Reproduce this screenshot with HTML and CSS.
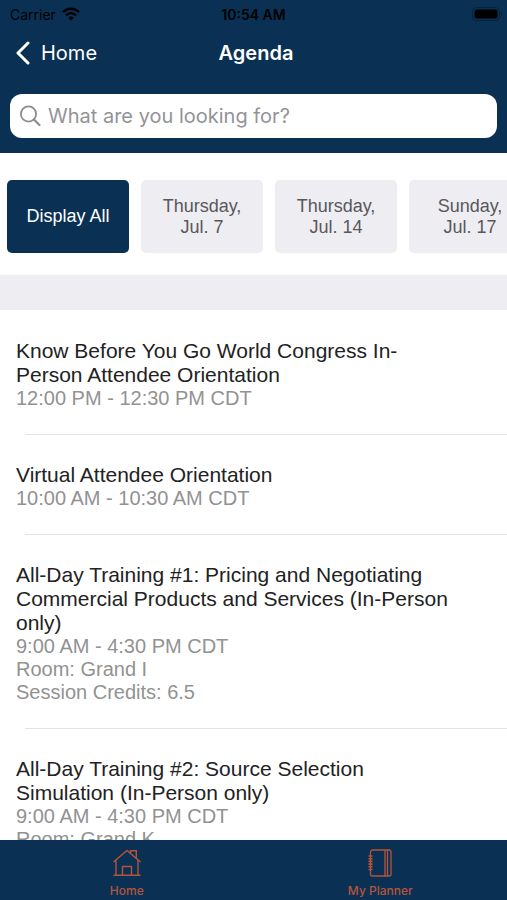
FILE: index.html
```html
<!DOCTYPE html>
<html lang="en">
<head>
<meta charset="utf-8">
<meta name="viewport" content="width=device-width, initial-scale=1">
<title>Agenda</title>
<link rel="stylesheet" href="styles.css">
</head>
<body>
<header class="header">
  <div class="status">
    <div class="carrier">
      <span>Carrier</span>
      <svg width="18" height="14" viewBox="0 0 18 14" fill="none" stroke="#000" stroke-width="2.4" aria-hidden="true">
        <path d="M1 5.2C5.5 .6 12.500 .6 17 5.200"/>
        <path d="M4 8.400C7 5.500 11 5.500 14 8.400"/>
        <path d="M9 13.400L6.300 10.700C7.800 9.200 10.200 9.200 11.700 10.700Z" fill="#000" stroke="none"/>
      </svg>
    </div>
    <span class="clock">10:54 AM</span>
    <svg class="battery" width="31" height="14" viewBox="0 0 31 14" aria-hidden="true">
      <rect x=".5" y=".5" width="27" height="13" rx="4" fill="none" stroke="#06233d"/>
      <rect x="2.500" y="2.500" width="23" height="9" rx="2" fill="#000"/>
      <path d="M29 5c1.500.5 1.500 3.500 0 4z" fill="#06233d"/>
    </svg>
  </div>
  <nav class="navbar">
    <a class="back" href="#home">
      <svg width="16" height="24" viewBox="0 0 16 24" fill="none" stroke="#fff" stroke-width="3" stroke-linecap="round" stroke-linejoin="round" aria-hidden="true"><path d="M13 2L3 12L13 22"/></svg>
      <span>Home</span>
    </a>
    <h1 class="title">Agenda</h1>
  </nav>
  <label class="search">
    <svg width="22" height="22" viewBox="0 0 22 22" fill="none" stroke="#8b8b90" stroke-width="1.800" stroke-linecap="round" aria-hidden="true"><circle cx="8.500" cy="9" r="7.600"/><path d="M14 14.500L19.500 20" stroke-width="2.200"/></svg>
    <input type="search" placeholder="What are you looking for?" aria-label="Search the agenda">
  </label>
</header>

<div class="days">
  <button class="day active" type="button">Display All</button>
  <button class="day" type="button">Thursday,<br>Jul. 7</button>
  <button class="day" type="button">Thursday,<br>Jul. 14</button>
  <button class="day" type="button">Sunday,<br>Jul. 17</button>
</div>

<main class="sessions">
  <article class="session">
    <h2>Know Before You Go World Congress In-Person Attendee Orientation</h2>
    <p>12:00 PM - 12:30 PM CDT</p>
  </article>
  <article class="session">
    <h2>Virtual Attendee Orientation</h2>
    <p>10:00 AM - 10:30 AM CDT</p>
  </article>
  <article class="session">
    <h2>All-Day Training #1: Pricing and Negotiating Commercial Products and Services (In-Person only)</h2>
    <p>9:00 AM - 4:30 PM CDT</p>
    <p>Room: Grand I</p>
    <p>Session Credits: 6.5</p>
  </article>
  <article class="session">
    <h2>All-Day Training #2: Source Selection Simulation (In-Person only)</h2>
    <p>9:00 AM - 4:30 PM CDT</p>
    <p>Room: Grand K</p>
  </article>
</main>

<nav class="tabbar">
  <a class="tab" href="#home">
    <svg width="30" height="28" viewBox="0 0 30 28" fill="none" stroke="currentColor" stroke-width="1.400" aria-hidden="true">
      <path d="M1.500 13L15 1.500L28.500 13M4 11V26M26 11V26M1.500 26.300H28.500M10.500 26V17.500H19.500V26M18.500 4.400V1.700H24.300V9.200"/>
    </svg>
    <span>Home</span>
  </a>
  <a class="tab" href="#planner">
    <svg width="26" height="28" viewBox="0 0 26 28" fill="none" stroke="currentColor" stroke-width="1.300" aria-hidden="true">
      <rect x="3.500" y="1" width="20.500" height="26" rx="2"/>
      <path d="M18 1V27M20.500 1V27"/>
      <path d="M1.500 7H5.500M1.500 9.700H5.500M1.500 12.400H5.500M1.500 15.100H5.500M1.500 17.800H5.500M1.500 20.500H5.500" stroke-width="1.600"/>
    </svg>
    <span>My Planner</span>
  </a>
</nav>
</body>
</html>
```
FILE: styles.css
```css
* {
  box-sizing: border-box;
}

body {
  margin: 0;
  height: 100vh;
  display: flex;
  flex-direction: column;
  background: #fff;
  font-family: "Liberation Sans", Arial, sans-serif;
}

h1,
h2,
p {
  margin: 0;
  font-weight: 400;
}

a {
  text-decoration: none;
}

svg {
  display: block;
  flex: none;
}

.header {
  flex: none;
  padding: 4px 10px 15px;
  background: #0a3154;
  font-family: Inter, sans-serif;
}

.status,
.navbar {
  display: grid;
  grid-template-columns: 1fr auto 1fr;
  align-items: center;
}

.status {
  height: 20px;
  font-size: 14px;
  color: #000;
}

.carrier {
  display: flex;
  align-items: center;
  gap: 6px;
}

.clock {
  font-weight: 600;
}

.battery {
  justify-self: end;
  margin-right: -6px;
}

.navbar {
  height: 57px;
  padding-left: 5px;
  color: #fff;
}

.back {
  display: flex;
  align-items: center;
  gap: 10px;
  font-size: 20px;
  color: #fff;
}

.title {
  grid-column: 2;
  font-size: 20px;
  font-weight: 600;
}

.search {
  display: flex;
  align-items: center;
  gap: 6px;
  height: 44px;
  margin-top: 13px;
  padding: 0 10px;
  border-radius: 12px;
  background: #fff;
}

.search input {
  flex: 1;
  min-width: 0;
  padding: 0;
  border: 0;
  outline: 0;
  background: none;
  font: 20px Inter, sans-serif;
}

.search input::placeholder {
  color: #939397;
}

.days {
  flex: none;
  display: flex;
  gap: 12px;
  padding: 27px 7px 22px;
  overflow-x: auto;
  scrollbar-width: none;
}

.day {
  flex: none;
  width: 122px;
  height: 73px;
  padding: 0;
  border: 0;
  border-radius: 5px;
  background: #eeedf2;
  color: #58585b;
  font: 18px/21px "Liberation Sans", Arial, sans-serif;
}

.day.active {
  background: #0a3154;
  color: #fff;
}

.sessions {
  flex: 1;
  min-height: 0;
  padding-top: 1px;
  border-top: 35px solid #eeedf2;
  overflow-y: auto;
  scrollbar-width: none;
}

.session {
  padding: 28px 50px 24px 16px;
  border-bottom: 1px solid #e4e4e6;
  border-image: linear-gradient(to right, transparent 26px, #e4e4e6 26px) 1;
}

.session h2 {
  font-size: 21px;
  line-height: 24px;
  color: #222;
}

.session p {
  font-size: 20px;
  line-height: 23px;
  color: #929292;
}

.tabbar {
  flex: none;
  display: flex;
  height: 60px;
  background: #0a3154;
}

.tab {
  flex: 1;
  display: flex;
  flex-direction: column;
  align-items: center;
  gap: 6px;
  padding-top: 9px;
  color: #b5533c;
  font: 500 12px/16px Inter, sans-serif;
}
```
